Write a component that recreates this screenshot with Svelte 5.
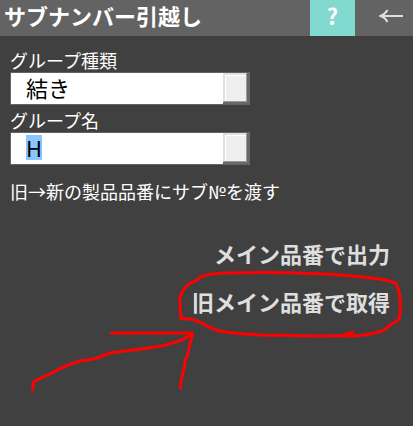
<script>
  import { onMount } from 'svelte';

  let kind = $state('結き');
  let name = $state('H');
  let nameField;

  onMount(() => {
    nameField.focus();
    nameField.select();
  });
</script>

<main class="panel">
  <header>
    <h1>サブナンバー引越し</h1>
    <button class="help" type="button">?</button>
    <button class="back" type="button" aria-label="戻る">
      <svg width="24" height="16" viewBox="0 0 24 16" fill="none" stroke="#dedede" stroke-width="2">
        <path d="M8.5 2C7 4.500 4.500 7 1.500 8c3 1 5.500 3 7 6M1.500 8H24" />
      </svg>
    </button>
  </header>

  <form onsubmit={(e) => e.preventDefault()}>
    <label for="kind">グループ種類</label>
    <div class="combo">
      <input id="kind" type="text" bind:value={kind} />
      <button type="button" aria-label="グループ種類の一覧"></button>
    </div>
    <label for="name">グループ名</label>
    <div class="combo">
      <input id="name" type="text" bind:value={name} bind:this={nameField} />
      <button type="button" aria-label="グループ名の一覧"></button>
    </div>
    <p>旧→新の製品品番にサブ№を渡す</p>
    <div class="actions">
      <button type="button">メイン品番で出力</button>
      <button type="button">旧メイン品番で取得</button>
    </div>
  </form>

  <svg class="marks" width="414" height="426" viewBox="0 0 414 426" aria-hidden="true">
    <path d="M181 318.500L180 305C179 293 183 290 190 283C194 281 196 282 199 278C208 272 232 273 262 272.500C300 272 350 275 379 279C388 281 393 281 396 284C400 290 401 298 400 312C400 319 399 321 392 324C386 328 384 331 379 332C365 335 358 337 342 335.500C318 337 290 335 260 335C242 334 226 333 216 330C207 327 202 322 194 320C190 318 186 319 181 318.500M342 336L353 332" />
    <path d="M32.500 390L33.500 382C40 378 45 376 52 373C62 367 70 364 80 361C87 360 91 360 97 358L110 353C130 350 147 349 166 345C178 342 188 338 192.500 333H111.500M192.500 333C191 343 188 348 188 354C187 357 185 358 185 362C184 370 183 374 182 377C181 382 180 384 180.500 388" />
  </svg>
</main>

<style>
  :global(body) {
    background: #fff;
  }
  .panel {
    position: relative;
    min-height: 100vh;
    margin-right: 1px;
    background: #404040;
    color: #fff;
    font-family: "Noto Sans CJK JP", sans-serif;
    font-size: 18px;
    line-height: 24px;
  }
  button,
  input {
    margin: 0;
    padding: 0;
    border: 0;
    border-radius: 0;
    font: inherit;
    color: inherit;
  }
  header {
    display: flex;
    height: 36px;
    background: #636363;
  }
  h1 {
    flex: 1;
    margin: 0;
    padding-left: 4px;
    font-size: 22px;
    line-height: 30px;
    font-weight: 700;
    white-space: nowrap;
  }
  .help {
    width: 45px;
    padding-bottom: 6px;
    background: #82d9d0;
    font-size: 22px;
    font-weight: 700;
  }
  .back {
    display: flex;
    align-items: center;
    justify-content: flex-end;
    width: 58px;
    padding: 0 10px 4px 0;
    background: none;
  }
  form {
    display: flex;
    flex-direction: column;
    padding: 12px 23px 0 10px;
  }
  label {
    line-height: 24px;
  }
  .combo {
    display: flex;
    box-sizing: border-box;
    width: 240px;
    height: 33px;
    margin-bottom: 3px;
    border: 1px solid #636363;
    border-right: 3px solid #6b6769;
    background: #6b6769;
  }
  .combo input {
    flex: 1;
    min-width: 0;
    padding: 0 0 2px 15px;
    outline: 0;
    background: #fff;
    color: #000;
    font-size: 22px;
    line-height: 25px;
  }
  .combo input::selection {
    background: #8cc6ff;
    color: #000;
  }
  .combo button {
    box-sizing: border-box;
    width: 24px;
    height: 29px;
    border: 1px solid;
    border-color: #e0e0e0 #949c9c #949c9c #e0e0e0;
    background: #efefef;
    box-shadow: inset 1px 1px #e0e0e0, inset 2px 2px #fff;
  }
  p {
    margin: 11px 0 0;
    white-space: nowrap;
  }
  .actions {
    display: flex;
    flex-direction: column;
    align-items: flex-end;
    gap: 16px;
    margin-top: 34px;
  }
  .actions button {
    background: none;
    color: #dedede;
    font-size: 22px;
    line-height: 32px;
    font-weight: 700;
    white-space: nowrap;
  }
  .marks {
    position: absolute;
    top: 0;
    left: 0;
    fill: none;
    stroke: #f00;
    stroke-width: 3;
    stroke-linecap: round;
    stroke-linejoin: round;
    pointer-events: none;
  }
</style>
